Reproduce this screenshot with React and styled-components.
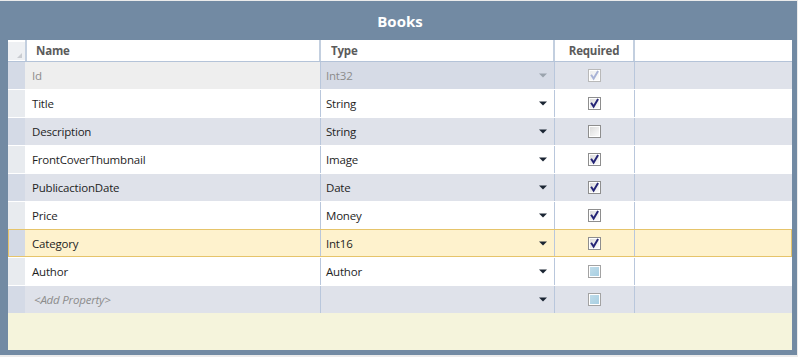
import React from "react";
import styled, { createGlobalStyle, css } from "styled-components";

const GlobalStyle = createGlobalStyle`
  html, body { margin: 0; padding: 0; background: #ebebeb; }
  body { font-family: "Open Sans", "Noto Sans", Arial, sans-serif; }
  * { box-sizing: border-box; }
`;

const COLS = "17px 296px 234px 80px 1fr";

const Frame = styled.div`
  margin-top: 1px;
  width: 797px;
  height: 354px;
  background: #728aa3;
  padding: 0 5px 5px 8px;
  display: flex;
  flex-direction: column;
`;

const TitleBar = styled.div`
  height: 39px;
  display: flex;
  align-items: center;
  justify-content: center;
  color: #ffffff;
  font-weight: 700;
  font-size: 15px;
  padding-top: 1px;
`;

const Grid = styled.div`
  flex: 1;
  background: #f5f4dc;
  display: flex;
  flex-direction: column;
`;

const HeaderRow = styled.div`
  display: grid;
  grid-template-columns: ${COLS};
  height: 22px;
  background: #ffffff;
  border-bottom: 1px solid #b4c3d8;
`;

const Corner = styled.div`
  background: #eef0f3;
  position: relative;
  margin: 2px 0 1px 0;
`;

const CornerMark = styled.svg`
  position: absolute;
  right: 3px;
  bottom: 2px;
`;

const HeaderCell = styled.div`
  display: flex;
  align-items: center;
  font-size: 11.5px;
  letter-spacing: -0.2px;
  font-weight: 700;
  color: #5b5b5b;
  padding-left: ${(p) => p.$pad || 10}px;
  justify-content: ${(p) => (p.$center ? "center" : "flex-start")};
  border-left: ${(p) => (p.$first ? "2px solid #c3cfdf" : "none")};
  border-right: ${(p) => (p.$noRight ? "none" : "2px solid #c3cfdf")};
  ${(p) => p.$center && css`padding-left: 0;`}
`;

const Body = styled.div`
  display: flex;
  flex-direction: column;
  gap: 1px;
  background: #ffffff;
`;

const Row = styled.div`
  position: relative;
  display: grid;
  grid-template-columns: ${COLS};
  height: 27px;
  background: ${(p) => (p.$selected ? "#fef2cd" : p.$alt ? "#dfe2ea" : "#ffffff")};
  ${(p) =>
    p.$selected &&
    css`
      &::after {
        content: "";
        position: absolute;
        top: -1px;
        left: 0;
        right: 0;
        bottom: 0;
        border: 1px solid #e6c46a;
        pointer-events: none;
      }
    `}
`;

const RowHeader = styled.div`
  background: ${(p) => (p.$alt ? "#d4dae6" : "#e8ebef")};
`;

const Cell = styled.div`
  display: flex;
  align-items: center;
  font-size: 11.5px;
  letter-spacing: -0.2px;
  color: ${(p) => (p.$muted ? "#8c8c8c" : "#1e1e1e")};
  font-style: ${(p) => (p.$italic ? "italic" : "normal")};
  padding-left: ${(p) => p.$pad || 0}px;
  background: ${(p) => p.$bg || "transparent"};
  border-right: ${(p) => (p.$noRight ? "none" : "1px solid #b9c7dc")};
  justify-content: ${(p) => (p.$center ? "center" : "flex-start")};
  white-space: nowrap;
`;

const TypeCell = styled(Cell)`
  justify-content: space-between;
  padding-right: 7px;
`;

const Arrow = ({ muted }) => (
  <svg width="8" height="5" viewBox="0 0 8 5">
    <path d="M0 0.5 H8 L4 4.5 Z" fill={muted ? "#9aa3ad" : "#1b2533"} />
  </svg>
);

const CheckBox = ({ variant }) => {
  const styles = {
    checked: { border: "#8e8e8e", top: "#dcdcdc", bottom: "#fbfbfb", check: "#232375" },
    unchecked: { border: "#8e8e8e", top: "#dcdcdc", bottom: "#fbfbfb", check: null },
    faded: { border: "#b9b9b9", top: "#eeeeee", bottom: "#fbfbfb", check: "#a9b3d6" },
    blue: { border: "#a3a3a3", top: "#bfdcea", bottom: "#a8cfe2", check: null },
  }[variant];
  const id = `g-${variant}`;
  return (
    <svg width="13" height="13" viewBox="0 0 13 13">
      <defs>
        <linearGradient id={id} x1="0" y1="0" x2="1" y2="1">
          <stop offset="0" stopColor={styles.top} />
          <stop offset="1" stopColor={styles.bottom} />
        </linearGradient>
      </defs>
      <rect x="0.5" y="0.5" width="12" height="12" fill="#ffffff" stroke={styles.border} />
      <rect x="2" y="2" width="9" height="9" fill={`url(#${id})`} />
      {styles.check && (
        <path
          d="M3.6 6.6 L5.6 9.6 L9.6 2.8"
          fill="none"
          stroke={styles.check}
          strokeWidth="1.9"
          strokeLinecap="square"
        />
      )}
    </svg>
  );
};

const rows = [
  { name: "Id", type: "Int32", req: "faded", disabled: true },
  { name: "Title", type: "String", req: "checked" },
  { name: "Description", type: "String", req: "unchecked" },
  { name: "FrontCoverThumbnail", type: "Image", req: "checked" },
  { name: "PublicactionDate", type: "Date", req: "checked" },
  { name: "Price", type: "Money", req: "checked" },
  { name: "Category", type: "Int16", req: "checked", selected: true },
  { name: "Author", type: "Author", req: "blue" },
  { name: "<Add Property>", type: "", req: "blue", placeholder: true },
];

export default function App() {
  return (
    <>
      <GlobalStyle />
      <Frame>
        <TitleBar>Books</TitleBar>
        <Grid>
          <HeaderRow>
            <Corner>
              <CornerMark width="5" height="5" viewBox="0 0 5 5">
                <path d="M5 0 V5 H0 Z" fill="#c9ccd1" />
              </CornerMark>
            </Corner>
            <HeaderCell $first $pad={9}>Name</HeaderCell>
            <HeaderCell $pad={10}>Type</HeaderCell>
            <HeaderCell $center>Required</HeaderCell>
            <HeaderCell $noRight />
          </HeaderRow>
          <Body>
            {rows.map((r, i) => {
              const alt = i % 2 === 0;
              return (
                <Row key={r.name} $alt={alt} $selected={r.selected}>
                  <RowHeader $alt={alt} />
                  <Cell
                    $pad={r.placeholder ? 9 : 7}
                    $muted={r.disabled || r.placeholder}
                    $italic={r.placeholder}
                    $bg={r.disabled ? "#eeeeee" : undefined}
                  >
                    {r.name}
                  </Cell>
                  <TypeCell
                    $pad={5}
                    $muted={r.disabled}
                    $bg={r.disabled ? "#d6dbe6" : undefined}
                  >
                    <span>{r.type}</span>
                    <Arrow muted={r.disabled} />
                  </TypeCell>
                  <Cell $center>
                    <CheckBox variant={r.req} />
                  </Cell>
                  <Cell $noRight />
                </Row>
              );
            })}
          </Body>
        </Grid>
      </Frame>
    </>
  );
}
